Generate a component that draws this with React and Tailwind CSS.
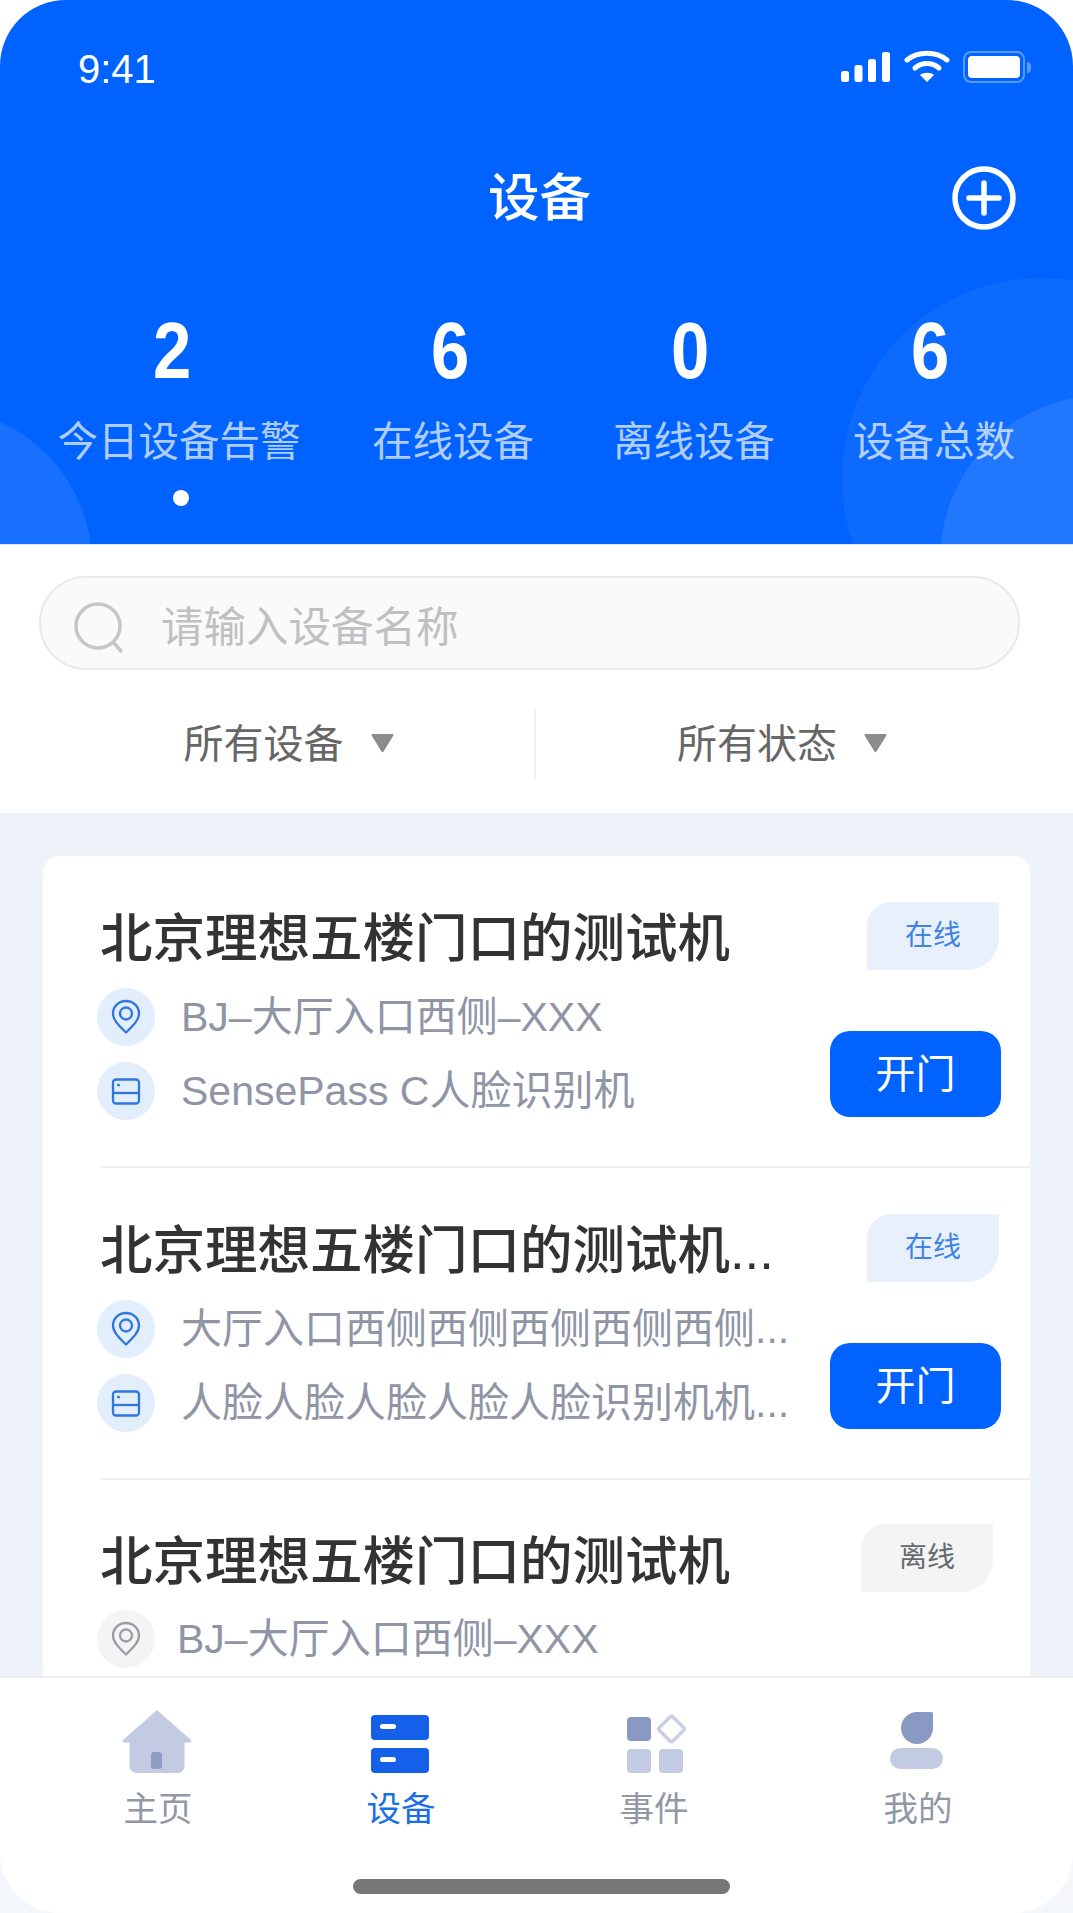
import React from "react";

function Pin({ color }) {
  return (
    <svg width="30" height="36" viewBox="0 0 30 36" fill="none" stroke={color} strokeWidth="2.3">
      <path d="M15 33.5C9 27.5 2 21.5 2 14.5C2 7.3 7.8 2 15 2s13 5.3 13 12.500c0 7-7 13-13 19Z" strokeLinejoin="round" />
      <circle cx="15" cy="14.5" r="6" />
    </svg>
  );
}

function DeviceIcon({ color }) {
  return (
    <svg width="30" height="27" viewBox="0 0 30 27" fill="none" stroke={color} strokeWidth="2.3">
      <rect x="2" y="1.500" width="26" height="24" rx="3" />
      <path d="M2 15h26" />
      <circle cx="7.500" cy="7" r="1.500" fill={color} stroke="none" />
    </svg>
  );
}

function InfoLine({ icon, text, grey, textGap = "ml-[26px]" }) {
  return (
    <div className="flex items-center h-[58px]">
      <div className={`flex items-center justify-center w-[58px] h-[58px] rounded-full shrink-0 -ml-[3px] ${grey ? "bg-[#f4f4f5]" : "bg-[#e3eefd]"}`}>
        {icon}
      </div>
      <span className={`${textGap} text-[41px] leading-[58px] text-[#8f95a5] whitespace-nowrap`}>{text}</span>
    </div>
  );
}

function Row({ title, loc, dev, online, last }) {
  const iconColor = online ? "#2f76e0" : "#9a9ca3";
  return (
    <div className={`ml-[57px] flex justify-between pr-[29px] ${last ? "" : "h-[312px] border-b-2 border-[#eef0f4]"}`}>
      <div className={`flex flex-col ${last ? "pt-[52px]" : "pt-[53px]"}`}>
        <div className="h-[60px] text-[52.500px] leading-[60px] font-medium text-[#333333] whitespace-nowrap">{title}</div>
        <div className={last ? "mt-[18px]" : "mt-[19px]"}>
          <InfoLine icon={<Pin color={iconColor} />} text={loc} grey={!online} textGap={online ? "ml-[26px]" : "ml-[22px]"} />
        </div>
        {dev && (
          <div className="mt-[16px]">
            <InfoLine icon={<DeviceIcon color={iconColor} />} text={dev} />
          </div>
        )}
      </div>
      <div className={`flex flex-col items-end ${last ? "pt-[44px] mr-[6px]" : "pt-[46px]"}`}>
        <div
          className={`w-[132px] h-[68px] mr-[2px] flex items-center justify-center rounded-tl-[24px] rounded-br-[32px] text-[28px] ${online ? "bg-[#e8f0fc] text-[#3f83e4]" : "bg-[#f4f4f5] text-[#666a70]"}`}
        >
          {online ? "在线" : "离线"}
        </div>
        {online && (
          <div className="mt-[61px] w-[171px] h-[86px] rounded-[20px] bg-[#0062ff] text-white text-[40px] flex items-center justify-center">
            开门
          </div>
        )}
      </div>
    </div>
  );
}

function Stat({ value, label, numOffset, dot, width }) {
  return (
    <div className={`flex flex-col items-center ${width}`}>
      <div className={`h-[70px] text-[80px] leading-[70px] font-bold text-white scale-x-[0.86] ${numOffset}`}>{value}</div>
      <div className="mt-[31px] text-[40.500px] leading-[50px] text-white/70 whitespace-nowrap">{label}</div>
      {dot && <div className="mt-[23px] w-[16px] h-[16px] rounded-full bg-white translate-x-[2px]" />}
    </div>
  );
}

function Filter({ label, className }) {
  return (
    <div className={`flex items-center justify-center ${className}`}>
      <span className="text-[40px] text-[#666666]">{label}</span>
      <svg className="ml-[26px] -translate-y-px" width="25" height="20" viewBox="0 0 24 20">
        <path d="M2 1h20a1 1 0 0 1 .9 1.500L13 18.500a1.200 1.200 0 0 1-2 0L1.100 2.500A1 1 0 0 1 2 1Z" fill="#8c8c8c" />
      </svg>
    </div>
  );
}

function Tab({ icon, label, active, className }) {
  return (
    <div className={`flex flex-col items-center absolute top-[19px] w-[120px] ${className}`}>
      <div className="h-[76px] flex items-end justify-center">{icon}</div>
      <div className={`mt-[14px] translate-x-[1px] text-[34.500px] leading-[44px] ${active ? "text-[#1c6fe0]" : "text-[#9198a6]"}`}>{label}</div>
    </div>
  );
}

export default function App() {
  return (
    <div className="w-[1073px] h-[1913px] bg-white overflow-hidden flex flex-col font-['Liberation_Sans','Noto_Sans_CJK_SC',sans-serif]">
      <header className="relative h-[545px] shrink-0 bg-[#0062ff] rounded-t-[66px] overflow-hidden border-b border-[#dbe9ff]">
        <div className="absolute left-[842px] top-[278px] w-[400px] h-[400px] rounded-full bg-white/[0.05]" />
        <div className="absolute left-[940px] top-[395px] w-[330px] h-[330px] rounded-full bg-white/[0.09]" />
        <div className="absolute left-[-220px] top-[408px] w-[312px] h-[360px] rounded-full bg-white/[0.09]" />

        <div className="relative">
          <div className="flex items-center justify-between pl-[78px] pr-[42px] pt-[46px] h-[92px]">
            <span className="text-[40px] leading-[46px] text-white">9:41</span>
            <div className="flex items-center gap-[13px] -translate-y-[2px]">
              <svg width="50" height="32" viewBox="0 0 50 32" fill="white">
                <rect x="0" y="20" width="8" height="11" rx="2.500" />
                <rect x="13.500" y="14" width="8" height="17" rx="2.500" />
                <rect x="27" y="8" width="8" height="23" rx="2.500" />
                <rect x="41" y="1" width="8" height="30" rx="2.500" />
              </svg>
              <svg width="46" height="34" viewBox="0 0 46 34" fill="none" stroke="white" strokeWidth="5" strokeLinecap="round">
                <path d="M3 10C14 1 32 1 43 10" />
                <path d="M11 18C18 12 28 12 35 18" />
                <path d="M23 32l-7-7c3-3 11-3 14 0Z" fill="white" stroke="none" />
              </svg>
              <div className="flex items-center">
                <div className="w-[62px] h-[32px] rounded-[8px] border-2 border-white/35 p-[3px]">
                  <div className="w-full h-full rounded-[4px] bg-white" />
                </div>
                <div className="w-[4px] h-[11px] ml-[2px] rounded-r-full bg-white/35" />
              </div>
            </div>
          </div>

          <div className="relative flex items-center justify-center mt-[76px] h-[60px]">
            <span className="text-[51.500px] leading-[60px] font-medium text-white ml-[6px]">设备</span>
            <svg className="absolute left-[952px] top-[-2px]" width="64" height="64" viewBox="0 0 64 64" fill="none" stroke="white" strokeWidth="5.500" strokeLinecap="round">
              <circle cx="32" cy="32" r="29" />
              <path d="M32 17v30M17 32h30" />
            </svg>
          </div>

          <div className="flex mt-[88px] pl-[59px]">
            <Stat value="2" label="今日设备告警" numOffset="-translate-x-[7px]" dot width="w-[240px]" />
            <div className="ml-[74px]"><Stat value="6" label="在线设备" numOffset="-translate-x-[3px]" width="w-[160px]" /></div>
            <div className="ml-[81px]"><Stat value="0" label="离线设备" numOffset="-translate-x-[4px]" width="w-[160px]" /></div>
            <div className="ml-[80px]"><Stat value="6" label="设备总数" numOffset="-translate-x-[4px]" width="w-[160px]" /></div>
          </div>
        </div>
      </header>

      <section className="shrink-0 h-[268px] px-[39px] pt-[31px] bg-white">
        <div className="w-[981px] h-[94px] rounded-full bg-[#fafafa] border-2 border-[#e9e9e9] flex items-center pl-[32px] pt-[9px]">
          <svg width="54" height="54" viewBox="0 0 54 54" fill="none" stroke="#c6c6c6" strokeWidth="3.500" strokeLinecap="round">
            <circle cx="25" cy="25" r="22" />
            <path d="M41 42l7 8" />
          </svg>
          <span className="ml-[34px] text-[42.500px] text-[#c0c0c0]">请输入设备名称</span>
        </div>
        <div className="flex items-center h-[70px] mt-[39px] -mx-[39px]">
          <Filter label="所有设备" className="w-[534px] pl-[44px]" />
          <div className="w-[2px] h-[70px] bg-[#f0f0f0]" />
          <Filter label="所有状态" className="flex-1 pr-[44px]" />
        </div>
      </section>

      <main className="flex-1 min-h-0 overflow-hidden bg-[#eef2f9] px-[43px] pt-[43px]">
        <div className="h-[900px] rounded-[16px] bg-white">
          <Row title="北京理想五楼门口的测试机" loc="BJ–大厅入口西侧–XXX" dev="SensePass C人脸识别机" online />
          <Row title="北京理想五楼门口的测试机..." loc="大厅入口西侧西侧西侧西侧西侧..." dev="人脸人脸人脸人脸人脸识别机机..." online />
          <Row title="北京理想五楼门口的测试机" loc="BJ–大厅入口西侧–XXX" last />
        </div>
      </main>

      <div className="shrink-0 bg-[#f3f6fb]">
        <nav className="relative h-[237px] bg-white border-t-2 border-[#eeeff2] rounded-b-[60px]">
          <Tab
            className="left-[97px]"
            label="主页"
            icon={
              <svg width="70" height="63" viewBox="0 0 70 63">
                <path d="M35 0L69 30a1.500 1.500 0 0 1-1 2.500H62.500V56a7 7 0 0 1-7 7H14.500a7 7 0 0 1-7-7V32.500H2A1.500 1.500 0 0 1 1 30Z" fill="#c3cbe2" />
                <rect x="29" y="42" width="11" height="17" rx="3" fill="#8e9cc6" />
              </svg>
            }
          />
          <Tab
            className="left-[340px]"
            label="设备"
            active
            icon={
              <svg width="58" height="58" viewBox="0 0 58 58">
                <rect width="58" height="25" rx="4" fill="#1460e8" />
                <rect y="33" width="58" height="25" rx="4" fill="#1460e8" />
                <rect x="9" y="9" width="16" height="5" rx="2.500" fill="white" />
                <rect x="9" y="42" width="16" height="5" rx="2.500" fill="white" />
              </svg>
            }
          />
          <Tab
            className="left-[593px]"
            label="事件"
            icon={
              <svg className="translate-x-[5px]" width="62" height="62" viewBox="0 0 62 62">
                <rect x="0" y="6" width="24" height="24" rx="4" fill="#8a99c4" />
                <rect x="0" y="38" width="24" height="24" rx="4" fill="#c3cbe2" />
                <rect x="32" y="38" width="24" height="24" rx="4" fill="#c3cbe2" />
                <rect x="35" y="8.500" width="19" height="19" rx="2" transform="rotate(45 44.500 18)" fill="none" stroke="#c9d0e4" strokeWidth="3.500" />
              </svg>
            }
          />
          <Tab
            className="left-[857px]"
            label="我的"
            icon={
              <svg width="54" height="61" viewBox="0 0 54 61">
                <path d="M27 0H41.500A1.500 1.500 0 0 1 43 1.500V16A16 16 0 1 1 27 0Z" fill="#8a99c4" />
                <rect x="0" y="36" width="53" height="21" rx="10.500" fill="#c3cbe2" />
              </svg>
            }
          />
          <div className="absolute left-[353px] top-[201px] w-[377px] h-[15px] rounded-full bg-[#777777]" />
        </nav>
      </div>
    </div>
  );
}
